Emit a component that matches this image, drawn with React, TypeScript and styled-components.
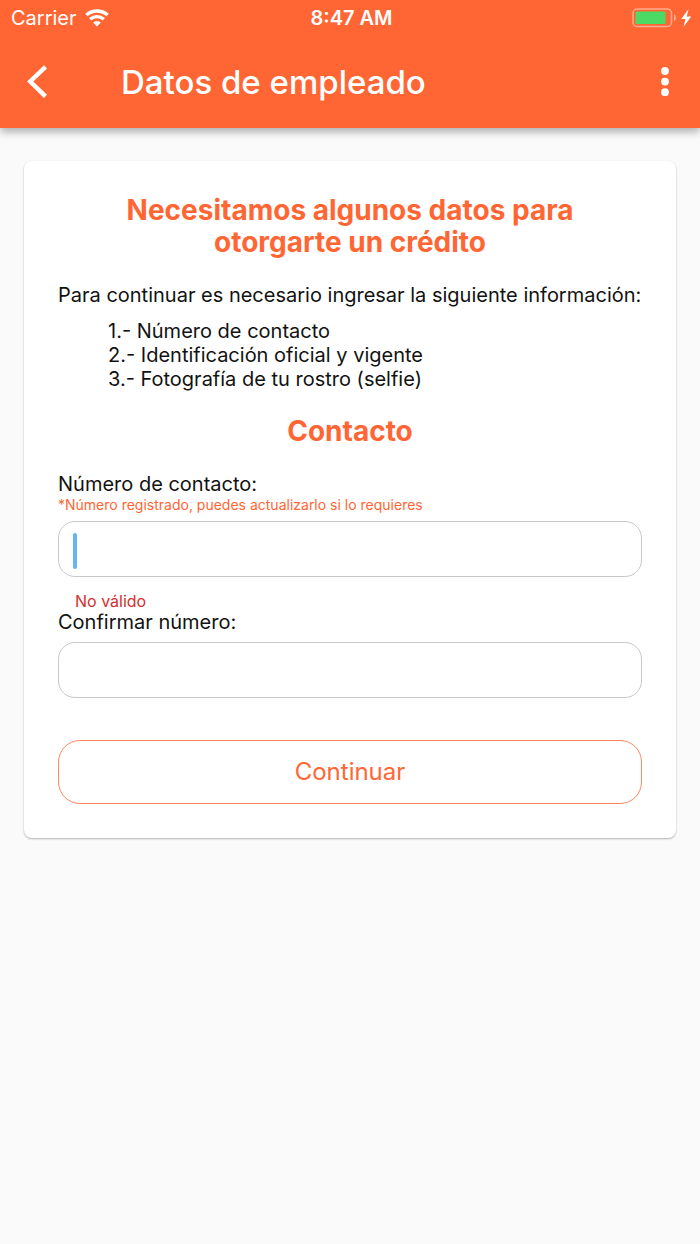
import React, { useState } from "react";
import styled, { createGlobalStyle } from "styled-components";

const orange = "#ff6634";

const GlobalStyle = createGlobalStyle`
  *, *::before, *::after { box-sizing: border-box; }
  body {
    margin: 0;
    background: #fafafa;
    color: #121212;
    font-family: Inter, "Liberation Sans", sans-serif;
    font-size: 20px;
    line-height: 24px;
  }
  h1, h2, p, ol { margin: 0; padding: 0; font-size: inherit; }
`;

const Header = styled.header`
  background: ${orange};
  color: #fff;
  box-shadow: 0 4px 8px rgba(0, 0, 0, 0.3);
`;

const StatusBar = styled.div`
  display: grid;
  grid-template-columns: 1fr auto 1fr;
  align-items: center;
  height: 36px;
  padding: 0 8px 0 11px;
`;

const Carrier = styled.div`
  display: flex;
  align-items: center;
  gap: 8px;
`;

const Clock = styled.time`
  font-weight: 600;
`;

const Power = styled.div`
  display: flex;
  align-items: center;
  justify-content: flex-end;
`;

const AppBar = styled.div`
  display: flex;
  align-items: center;
  height: 92px;
  padding: 0 11px 0 13px;
`;

const IconButton = styled.button`
  display: flex;
  align-items: center;
  justify-content: center;
  width: 48px;
  height: 48px;
  padding: 0;
  border: 0;
  background: none;
  color: inherit;
`;

const PageTitle = styled.h1`
  flex: 1;
  padding-left: 60px;
  font-size: 33px;
  line-height: 40px;
  font-weight: 500;
`;

const Card = styled.main`
  margin: 33px 24px 24px;
  padding: 33px 34px 34px;
  border-radius: 8px;
  background: #fff;
  box-shadow: 0 1px 2px rgba(0, 0, 0, 0.3);
`;

const Heading = styled.h2`
  color: ${orange};
  font-size: 28px;
  line-height: 32px;
  font-weight: 700;
  text-align: center;
`;

const Intro = styled.p`
  margin: 25px 0 12px;
`;

const Requirements = styled.ol`
  margin-bottom: 24px;
  padding-left: 50px;
  list-style: none;
`;

const Form = styled.form`
  display: flex;
  flex-direction: column;
  margin-top: 25px;
`;

const Label = styled.label`
  display: block;
`;

const Hint = styled.p<{ $error?: boolean }>`
  color: ${(p) => (p.$error ? "#d32f2f" : orange)};
  font-size: ${(p) => (p.$error ? 16 : 14)}px;
  line-height: 17px;
  padding-left: ${(p) => (p.$error ? 17 : 0)}px;
  margin-top: ${(p) => (p.$error ? 16 : 0)}px;
`;

const Field = styled.div`
  display: flex;
  align-items: center;
  height: 56px;
  margin-top: 8px;
  padding: 0 14px;
  border: 1px solid #c8c8c8;
  border-radius: 17px;
`;

const Caret = styled.span`
  width: 4px;
  height: 36px;
  margin-top: 4px;
  border-radius: 2px;
  background: #64b5f6;
`;

const Input = styled.input`
  flex: 1;
  min-width: 0;
  border: 0;
  outline: 0;
  background: none;
  color: inherit;
  font: inherit;
`;

const SubmitButton = styled.button`
  height: 64px;
  margin-top: 42px;
  border: 1px solid #ff8860;
  border-radius: 22px;
  background: #fff;
  color: ${orange};
  font: inherit;
  font-size: 24px;
`;

const WifiIcon = () => (
  <svg width="24" height="18" viewBox="0 0 24 18" fill="none" stroke="#fff" strokeWidth="3.4" aria-hidden="true">
    <path d="M1.4 6C7.400 .6 16.600 .6 22.600 6" />
    <path d="M5.200 10.200c3.800-3.500 9.800-3.500 13.600 0" />
    <path d="M12 17.500l-3.900-3.900c2.200-1.900 5.600-1.900 7.800 0z" fill="#fff" stroke="none" />
  </svg>
);

const BatteryIcon = () => (
  <svg width="60" height="20" viewBox="0 0 60 20" aria-label="Batería cargando" role="img">
    <rect x="1" y="1" width="38.5" height="17.5" rx="4" fill="none" stroke="#fff" strokeOpacity=".45" strokeWidth="1.5" />
    <rect x="3.5" y="3.5" width="30" height="12.5" rx="1" fill="#4cd964" />
    <path d="M42 6.500c2.400.8 2.400 5.900 0 6.700z" fill="#fff" fillOpacity=".5" />
    <path d="M56.500 1L49.300 11h4.200l-2 8L59.200 8.400h-4.400z" fill="#fff" />
  </svg>
);

const BackIcon = () => (
  <svg width="22" height="34" viewBox="0 0 22 34" fill="none" stroke="#fff" strokeWidth="4.4" aria-hidden="true">
    <path d="M19.500 1.800L4.200 16.500l15.300 14.900" />
  </svg>
);

const MoreIcon = () => (
  <svg width="8" height="30" viewBox="0 0 8 30" fill="#fff" aria-hidden="true">
    <circle cx="4" cy="4" r="3.900" />
    <circle cx="4" cy="14.600" r="3.900" />
    <circle cx="4" cy="25.200" r="3.900" />
  </svg>
);

export default function App() {
  const [phone, setPhone] = useState("");
  const [confirmation, setConfirmation] = useState("");

  return (
    <>
      <GlobalStyle />
      <Header>
        <StatusBar>
          <Carrier>
            <span>Carrier</span>
            <WifiIcon />
          </Carrier>
          <Clock>8:47 AM</Clock>
          <Power>
            <BatteryIcon />
          </Power>
        </StatusBar>
        <AppBar>
          <IconButton type="button" aria-label="Regresar">
            <BackIcon />
          </IconButton>
          <PageTitle>Datos de empleado</PageTitle>
          <IconButton type="button" aria-label="Más opciones">
            <MoreIcon />
          </IconButton>
        </AppBar>
      </Header>
      <Card>
        <Heading>
          Necesitamos algunos datos para
          <br />
          otorgarte un crédito
        </Heading>
        <Intro>Para continuar es necesario ingresar la siguiente información:</Intro>
        <Requirements>
          <li>1.- Número de contacto</li>
          <li>2.- Identificación oficial y vigente</li>
          <li>3.- Fotografía de tu rostro (selfie)</li>
        </Requirements>
        <Heading>Contacto</Heading>
        <Form onSubmit={(e) => e.preventDefault()}>
          <Label htmlFor="phone">Número de contacto:</Label>
          <Hint id="phone-hint">*Número registrado, puedes actualizarlo si lo requieres</Hint>
          <Field>
            <Caret />
            <Input
              id="phone"
              type="tel"
              aria-describedby="phone-hint phone-error"
              aria-invalid="true"
              value={phone}
              onChange={(e) => setPhone(e.target.value)}
            />
          </Field>
          <Hint id="phone-error" $error>
            No válido
          </Hint>
          <Label htmlFor="confirmation">Confirmar número:</Label>
          <Field>
            <Input
              id="confirmation"
              type="tel"
              value={confirmation}
              onChange={(e) => setConfirmation(e.target.value)}
            />
          </Field>
          <SubmitButton type="submit">Continuar</SubmitButton>
        </Form>
      </Card>
    </>
  );
}
